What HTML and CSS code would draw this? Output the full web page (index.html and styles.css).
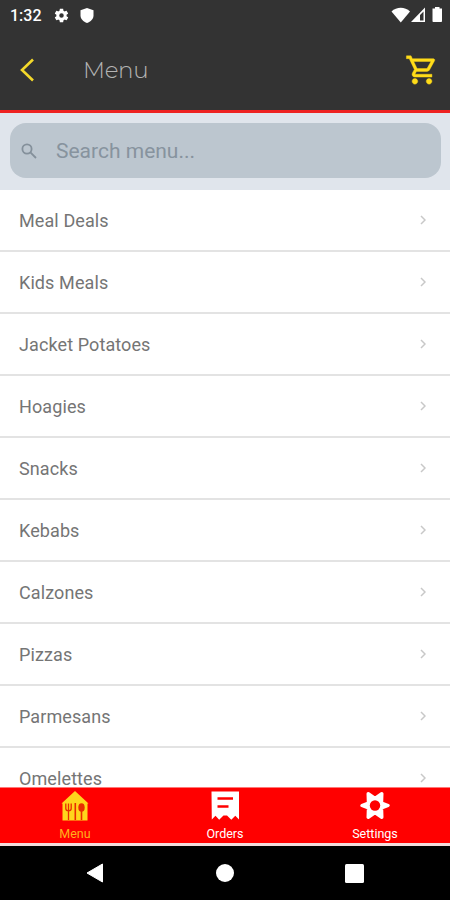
FILE: index.html
```html
<!DOCTYPE html>
<html lang="en">
<head>
  <meta charset="UTF-8" />
  <meta name="viewport" content="width=device-width, initial-scale=1" />
  <title>Menu</title>
  <link rel="stylesheet" href="styles.css">
</head>
<body>

  <header>
    <div class="status-bar">
      <span class="time">1:32</span>
      <svg class="status-gear" width="17" height="17" viewBox="0 0 24 24"><path fill="#fff" d="M19.1 12.9a7 7 0 0 0 0-1.8l2-1.6c.2-.1.2-.4.1-.6l-1.9-3.3c-.1-.2-.4-.3-.6-.2l-2.4 1a7 7 0 0 0-1.6-1L14.400 2.800c0-.2-.2-.4-.5-.4h-3.800c-.2 0-.4.2-.5.400L9.200 5.400a7 7 0 0 0-1.600 1l-2.400-1c-.2-.1-.5 0-.6.2L2.700 8.900c-.1.2-.1.5.1.6l2 1.600a7 7 0 0 0 0 1.800l-2 1.600c-.2.1-.2.4-.1.6l1.900 3.300c.1.2.4.3.6.2l2.400-1a7 7 0 0 0 1.600 1l.4 2.600c0 .2.2.4.5.4h3.800c.2 0 .4-.2.5-.4l.4-2.600a7 7 0 0 0 1.600-1l2.400 1c.2.1.5 0 .6-.2l1.900-3.300c.1-.2.1-.5-.1-.6zM12 15.200a3.200 3.200 0 1 1 0-6.400 3.200 3.200 0 0 1 0 6.400z"/></svg>
      <svg class="status-shield" width="14" height="15" viewBox="0 0 14 15"><path fill="#fff" d="M7 0l6.500 2.200v5.300c0 3.500-2.800 6.300-6.500 7.500C3.300 13.800.5 11 .5 7.500V2.200z"/></svg>
      <svg class="status-signal" width="54" height="18" viewBox="0 0 54 18">
        <path fill="#fff" d="M.5 5.500C5.500.6 14 .6 19 5.500L9.800 16.500z"/>
        <path fill="#fff" fill-rule="evenodd" d="M20 16L34 1.500V16zM29 9v5.500h3.500V5.500z"/>
        <path fill="#fff" d="M44 1h4.500v1.500H51v12.700c0 .5-.4.800-.8.800h-7.900c-.5 0-.8-.3-.8-.8V2.500H44z"/>
      </svg>
    </div>
    <div class="title-bar">
      <svg class="back" width="16" height="24" viewBox="0 0 16 24"><path fill="none" stroke="#f4d92b" stroke-width="2.600" d="M14 1.500L3 12l11 10.500"/></svg>
      <h1>Menu</h1>
      <svg class="cart" width="34" height="34" viewBox="0 0 24 24"><path fill="#ffdc19" stroke="#ffdc19" stroke-width=".3" d="M15.550 13c.75 0 1.410-.41 1.750-1.030l3.580-6.490A.996.996 0 0 0 20.010 4H5.210l-.94-2H1v2h2l3.600 7.590-1.350 2.440C4.520 15.370 5.480 17 7 17h12v-2H7l1.100-2h7.450zM6.160 6h12.150l-2.760 5H8.530L6.160 6zM7 18c-1.100 0-1.990.9-1.990 2S5.900 22 7 22s2-.9 2-2-.9-2-2-2zm10 0c-1.100 0-1.990.9-1.990 2s.89 2 1.990 2 2-.9 2-2-.9-2-2-2z"/></svg>
    </div>
  </header>

  <div class="search-container">
    <div class="search">
      <svg width="16" height="16" viewBox="0 0 16 16"><g fill="none" stroke="#84909b" stroke-width="1.800"><circle cx="6" cy="6" r="4.600"/><path d="M9.400 9.400L15 15"/></g></svg>
      <span>Search menu...</span>
    </div>
  </div>

  <ul class="menu-list">
    <li>Meal Deals<svg width="6" height="10" viewBox="0 0 6 10"><path d="M1 1l4 4-4 4"/></svg></li>
    <li>Kids Meals<svg width="6" height="10" viewBox="0 0 6 10"><path d="M1 1l4 4-4 4"/></svg></li>
    <li>Jacket Potatoes<svg width="6" height="10" viewBox="0 0 6 10"><path d="M1 1l4 4-4 4"/></svg></li>
    <li>Hoagies<svg width="6" height="10" viewBox="0 0 6 10"><path d="M1 1l4 4-4 4"/></svg></li>
    <li>Snacks<svg width="6" height="10" viewBox="0 0 6 10"><path d="M1 1l4 4-4 4"/></svg></li>
    <li>Kebabs<svg width="6" height="10" viewBox="0 0 6 10"><path d="M1 1l4 4-4 4"/></svg></li>
    <li>Calzones<svg width="6" height="10" viewBox="0 0 6 10"><path d="M1 1l4 4-4 4"/></svg></li>
    <li>Pizzas<svg width="6" height="10" viewBox="0 0 6 10"><path d="M1 1l4 4-4 4"/></svg></li>
    <li>Parmesans<svg width="6" height="10" viewBox="0 0 6 10"><path d="M1 1l4 4-4 4"/></svg></li>
    <li>Omelettes<svg width="6" height="10" viewBox="0 0 6 10"><path d="M1 1l4 4-4 4"/></svg></li>
  </ul>

  <nav class="tabs">
    <div class="tab active">
      <svg width="30" height="32" viewBox="0 0 30 32">
        <path fill="#ffd51c" d="M15 1l13.500 12.500H27.500V30.500h-25V13.500H1.500z"/>
        <g fill="none" stroke="#e92d00" stroke-width="1.300"><path d="M5.800 13.500v5c0 3 5.400 3 5.400 0v-5M8.500 13.500V30"/><path stroke-width="1.600" d="M15.300 13v17M21.500 21v9"/></g>
        <ellipse cx="21.500" cy="17.500" rx="3.200" ry="4.300" fill="#e92d00"/>
      </svg>
      <span>Menu</span>
    </div>
    <div class="tab">
      <svg width="30" height="32" viewBox="0 0 30 32">
        <path fill="#fff" d="M1.500 1.500h27.500V29.500l-3.700-3.700-4 4-4.300-4.300h-3.500l-4.300 4.300-3.700-4-3.700 3.700z"/>
        <path stroke="#f00" stroke-width="2.400" d="M7.500 8.500h15.500M7.500 16.500h11"/>
      </svg>
      <span>Orders</span>
    </div>
    <div class="tab">
      <svg width="30" height="32" viewBox="0 0 30 32">
        <path fill="#fff" stroke="#fff" stroke-width="3.400" stroke-linejoin="round" d="M28 15.500L21.500 18 21.800 27.300 15 22.500 8.200 27.300 8.500 18 2 15.500 8.500 13 8.200 3.700 15 8.500 21.800 3.700 21.500 13z"/>
        <circle cx="15" cy="15.500" r="5.200" fill="#f00"/>
      </svg>
      <span>Settings</span>
    </div>
  </nav>

  <div class="android-nav">
    <svg width="18" height="20" viewBox="0 0 18 20"><path fill="#fff" stroke="#fff" stroke-linejoin="round" d="M1 10L16.500 1v18z"/></svg>
    <svg width="18" height="18" viewBox="0 0 18 18"><circle cx="9" cy="9" r="9" fill="#fff"/></svg>
    <svg width="19" height="19" viewBox="0 0 19 19"><rect width="19" height="19" rx="1.500" fill="#fff"/></svg>
  </div>

</body>
</html>
```

FILE: styles.css
```css
* {
  box-sizing: border-box;
}
body {
  margin: 0;
  height: 900px;
  display: flex;
  flex-direction: column;
  overflow: hidden;
  font-family: Roboto, sans-serif;
  background: white;
}
svg {
  display: block;
  flex: none;
}
header {
  flex: none;
  height: 113px;
  background: #333333;
  border-bottom: 3px solid #ee2222;
}
.status-bar {
  display: flex;
  align-items: center;
  height: 30px;
  padding: 0 5px 0 10px;
  color: white;
}
.time {
  width: 43px;
  font-size: 16px;
  font-weight: 500;
}
.status-shield {
  margin-left: 10px;
}
.status-signal {
  margin-left: auto;
}
.title-bar {
  display: flex;
  align-items: center;
  height: 80px;
  padding: 0 11px 0 19px;
}
h1 {
  margin: 0 0 0 48px;
  font-family: Montserrat, Inter, sans-serif;
  font-size: 23px;
  font-weight: 300;
  letter-spacing: -0.3px;
  color: #b4b4b4;
}
.cart {
  margin-left: auto;
}
.search-container {
  flex: none;
  height: 77px;
  padding: 10px 9px 0 10px;
  background: #e0e5ec;
}
.search {
  display: flex;
  align-items: center;
  gap: 19px;
  height: 55px;
  padding-left: 11px;
  border-radius: 16px;
  background: #bcc6cf;
  color: #87939e;
  font-size: 21px;
}
.menu-list {
  flex: 1;
  min-height: 0;
  margin: 0;
  padding: 0;
  overflow: hidden;
  list-style: none;
}
.menu-list li {
  display: flex;
  align-items: center;
  justify-content: space-between;
  height: 62px;
  padding: 1px 24px 0 19px;
  border-bottom: 2px solid #e3e3e3;
  color: #757575;
  font-size: 18px;
  letter-spacing: 0.1px;
}
.menu-list svg {
  margin-bottom: 2px;
}
.menu-list path {
  fill: none;
  stroke: #c8c8c8;
  stroke-width: 1.5;
}
.tabs {
  flex: none;
  display: flex;
  height: 59px;
  background: red;
  border-top: 1px solid #ff7777;
  border-bottom: 3px solid #f2dcdc;
}
.tab {
  flex: 1;
  display: flex;
  flex-direction: column;
  align-items: center;
  padding-top: 2px;
  color: white;
  font-size: 12.5px;
  font-weight: 400;
}
.tab span {
  margin-top: 5px;
  line-height: 14px;
}
.tab.active {
  color: #ffb01c;
}
.android-nav {
  flex: none;
  display: flex;
  align-items: center;
  justify-content: space-between;
  height: 54px;
  padding: 0 86px;
  background: black;
}
```
